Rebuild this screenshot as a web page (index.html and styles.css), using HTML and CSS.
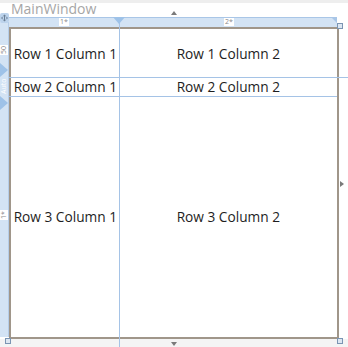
FILE: index.html
```html
<!DOCTYPE html>
<html>
<head>
<meta charset="utf-8">
<link rel="stylesheet" href="styles.css">
</head>
<body>
<div class="top-strip"></div>
<div class="title-row">
  <span class="title">MainWindow</span>
  <span class="arrow-up"></span>
</div>
<div class="designer">
  <div class="move-handle">
    <svg width="9" height="10" viewBox="0 0 9 10"><rect x="0" y="0" width="9" height="10" rx="2" fill="#bcd3ec"/><path d="M4.5 1.5 L2.8 3.3 H4 V6.7 H2.8 L4.5 8.5 L6.2 6.7 H5 V3.3 H6.2 Z M1 5 L2.6 3.6 V6.4 Z M8 5 L6.4 3.6 V6.4 Z" fill="#6b7f95"/></svg>
  </div>
  <div class="row-ruler">
    <span class="rlabel l50">50</span>
    <span class="rlabel lauto">Auto</span>
    <span class="rlabel lstar">1*</span>
  </div>
  <div class="col-ruler">
    <span class="clabel c1">1*</span>
    <span class="clabel c2">2*</span>
  </div>
  <div class="gutter-right"></div>
  <div class="frame">
    <div class="cell">Row 1 Column 1</div>
    <div class="cell">Row 1 Column 2</div>
    <div class="cell">Row 2 Column 1</div>
    <div class="cell">Row 2 Column 2</div>
    <div class="cell">Row 3 Column 1</div>
    <div class="cell">Row 3 Column 2</div>
  </div>
  <div class="bottom-strip"></div>

  <div class="vline"></div>
  <div class="hline h1"></div>
  <div class="hline h2"></div>
  <div class="col-marker"></div>
  <div class="row-marker m1"></div>
  <div class="row-marker m2"></div>
  <div class="sq sq-tr"></div>
  <div class="sq sq-br"></div>
  <div class="sq sq-bl"></div>
  <div class="arrow-right"></div>
  <div class="arrow-down"></div>
</div>
</body>
</html>
```
FILE: styles.css
```css
html, body {
  margin: 0;
  padding: 0;
  background: #ffffff;
  width: 348px;
  height: 347px;
  overflow: hidden;
  font-family: "Open Sans", "Noto Sans", sans-serif;
}
.top-strip {
  height: 3px;
  background: #eeeeee;
}
.title-row {
  height: 14px;
  position: relative;
}
.title {
  position: absolute;
  left: 11px;
  top: -3px;
  font-size: 14px;
  line-height: 18px;
  color: #a6a6a6;
  font-family: "Open Sans", sans-serif;
}
.arrow-up {
  position: absolute;
  left: 171px;
  top: 8px;
  width: 0;
  height: 0;
  border-left: 3.5px solid transparent;
  border-right: 3.5px solid transparent;
  border-bottom: 4px solid #7a7a7a;
}
.designer {
  position: relative;
  display: grid;
  grid-template-columns: 9px 330px 9px;
  grid-template-rows: 10px 312px 8px;
}
.row-ruler {
  grid-column: 1;
  grid-row: 1 / 3;
  margin-top: 5px;
  margin-bottom: 2px;
  background: #d3e3f4;
  border-right: 1px solid #b5cde8;
  box-sizing: border-box;
  position: relative;
}
.col-ruler {
  grid-column: 2;
  grid-row: 1;
  margin-right: 2px;
  background: #d3e3f4;
  border-top: 1px solid #a9c6e7;
  box-sizing: border-box;
  position: relative;
}
.col-ruler::after {
  content: "";
  position: absolute;
  right: 0;
  top: 0;
  border-top: 5px solid #a9c6e7;
  border-left: 5px solid transparent;
}
.gutter-right {
  grid-column: 3;
  grid-row: 1 / 3;
}
.clabel {
  position: absolute;
  top: 0;
  font-size: 7px;
  line-height: 8px;
  color: #8a8a8a;
  background: #ffffff;
  padding: 0 1px;
}
.c1 { left: 50px; }
.c2 { left: 215px; }
.rlabel {
  position: absolute;
  left: 0;
  font-size: 7px;
  line-height: 8px;
  color: #8a8a8a;
  background: #ffffff;
  padding: 0 1px;
  transform-origin: 0 0;
  transform: rotate(-90deg);
}
.l50 { top: 33px; }
.lauto { top: 73px; background: transparent; color: #ffffff; }
.lstar { top: 198px; }
.frame {
  grid-column: 2;
  grid-row: 2;
  border: 2px solid #a0968a;
  background: #ffffff;
  display: grid;
  grid-template-columns: 1fr 2fr;
  grid-template-rows: 48px 19px 1fr;
}
.cell {
  display: flex;
  align-items: center;
  justify-content: center;
  font-size: 13.7px;
  color: #1e1e1e;
  white-space: nowrap;
}
.bottom-strip {
  grid-column: 1 / 4;
  grid-row: 3;
  background: #f4f4f4;
}
.vline {
  position: absolute;
  left: 119px;
  top: 0;
  bottom: 0;
  width: 1px;
  background: #a5c3e6;
}
.hline {
  position: absolute;
  height: 1px;
  background: #a5c3e6;
  left: 9px;
}
.h1 { top: 60px; right: 0; }
.h2 { top: 79px; right: 11px; }
.col-marker {
  position: absolute;
  left: 113px;
  top: 0;
  width: 0;
  height: 0;
  border-left: 6.5px solid transparent;
  border-right: 6.5px solid transparent;
  border-top: 7px solid #9ec2e8;
}
.row-marker {
  position: absolute;
  left: 0;
  width: 0;
  height: 0;
  border-top: 7px solid transparent;
  border-bottom: 7px solid transparent;
  border-left: 8px solid #9ec2e8;
}
.m1 { top: 46px; }
.m2 { top: 79px; }
.sq {
  position: absolute;
  width: 6px;
  height: 6px;
  box-sizing: border-box;
  border: 1px solid #7b95b3;
  background: #dde7f2;
}
.sq-tr { left: 337px; top: 6px; }
.sq-br { left: 337px; top: 321px; }
.sq-bl { left: 5px; top: 321px; }
.move-handle {
  position: absolute;
  left: 0;
  top: -4px;
  line-height: 0;
  z-index: 2;
}
.arrow-right {
  position: absolute;
  left: 340px;
  top: 164px;
  width: 0;
  height: 0;
  border-top: 3.5px solid transparent;
  border-bottom: 3.5px solid transparent;
  border-left: 4px solid #7a7a7a;
}
.arrow-down {
  position: absolute;
  left: 171px;
  top: 325px;
  width: 0;
  height: 0;
  border-left: 3.5px solid transparent;
  border-right: 3.5px solid transparent;
  border-top: 4px solid #7a7a7a;
}
```
